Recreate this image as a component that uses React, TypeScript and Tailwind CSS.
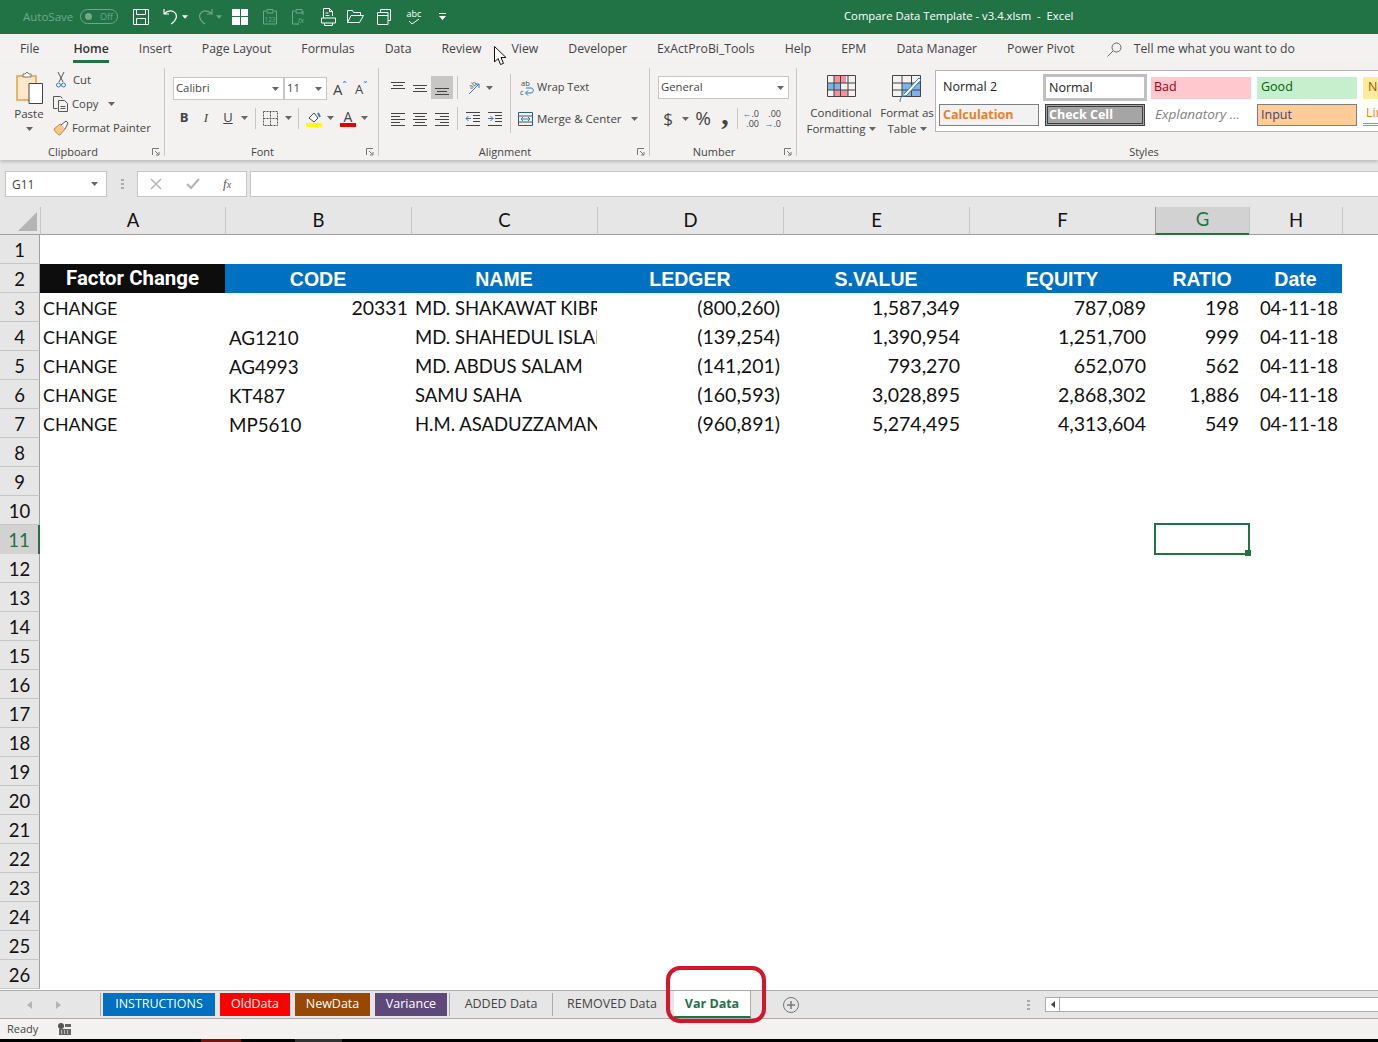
import type { ReactNode } from "react";

const ui = "font-['Open_Sans','Noto_Sans',sans-serif]";
const sheetFont = "font-['Lato','Noto_Sans',sans-serif]";

const Caret = ({ className = "text-[#666]" }: { className?: string }) => (
  <svg width="7" height="4" viewBox="0 0 7 4" className={className}>
    <path d="M0 0h7L3.5 4z" fill="currentColor" />
  </svg>
);

const Launcher = () => (
  <svg width="8" height="8" viewBox="0 0 8 8" fill="none" stroke="#777" strokeWidth="1">
    <path d="M0.5 7V0.5H7" />
    <path d="M3 3l3.5 3.5M7 4v3H4" />
  </svg>
);

const VSep = ({ className = "h-[24px]" }: { className?: string }) => (
  <div className={`w-px bg-[#c8c6c4] shrink-0 ${className}`} />
);

const Group = ({
  label,
  width,
  children,
}: {
  label: string;
  width: string;
  children: ReactNode;
}) => (
  <div className={`${width} h-[88px] shrink-0 border-r border-[#c8c6c4] flex flex-col`}>
    <div className="h-[76px] shrink-0">{children}</div>
    <div className="h-[16px] flex items-center text-[11px] text-[#444] leading-[16px]">
      <span className="flex-1 text-center">{label}</span>
      <span className="w-[18px] flex justify-end pr-[4px]">
        <Launcher />
      </span>
    </div>
  </div>
);

const TitleBar = () => (
  <div className="h-[34px] shrink-0 bg-[#217346] flex items-center text-white pb-[1px]">
    <span className="ml-[23px] w-[50px] text-[11.5px] text-[#6ea98a]">AutoSave</span>
    <div className="ml-[7px] w-[38px] h-[15px] rounded-full border border-[#6ea98a] flex items-center justify-between px-[4px] text-[9px] text-[#6ea98a]">
      <span className="w-[7px] h-[7px] rounded-full bg-[#6ea98a]" />
      <span>Off</span>
    </div>
    <svg className="ml-[15px]" width="16" height="16" viewBox="0 0 16 16" fill="none" stroke="#fff">
      <path d="M.5.5h15v15H.5zM3.5.5v5h9v-5M3.5 15.5v-6h9v6" />
    </svg>
    <svg className="ml-[14px]" width="16" height="17" viewBox="0 0 16 17" fill="none" stroke="#fff" strokeWidth="1.2">
      <path d="M1 1v5h5M1 6c3-3 7-4 10-2 4 3 3 8-3 12" />
    </svg>
    <span className="ml-[3px] w-[6px] flex">
      <Caret className="text-white" />
    </span>
    <svg className="ml-[9px]" width="16" height="17" viewBox="0 0 16 17" fill="none" stroke="#6ea98a" strokeWidth="1.2">
      <path d="M15 1v5h-5M15 6c-3-3-7-4-10-2-4 3-3 8 3 12" />
    </svg>
    <span className="ml-[3px] w-[6px] flex">
      <Caret className="text-[#6ea98a]" />
    </span>
    <div className="ml-[10px] w-[16px] h-[16px] grid grid-cols-2 gap-px">
      <span className="bg-white" />
      <span className="bg-white" />
      <span className="bg-white" />
      <span className="bg-white" />
    </div>
    <svg className="ml-[15px]" width="14" height="17" viewBox="0 0 14 17" fill="none" stroke="#6ea98a">
      <path d="M3 3H.5v13h13V3H11M4 1.500h6V5H4z" />
      <text x="7" y="14" fontSize="6.500" textAnchor="middle" fill="#6ea98a" stroke="none">123</text>
    </svg>
    <svg className="ml-[15px]" width="14" height="17" viewBox="0 0 14 17" fill="none" stroke="#6ea98a">
      <path d="M3 3H.5v13h6M11 3v4M4 1.500h6V5H4z" />
      <text x="9" y="15" fontSize="8" fontStyle="italic" textAnchor="middle" fill="#6ea98a" stroke="none">fx</text>
    </svg>
    <svg className="ml-[15px]" width="15" height="18" viewBox="0 0 15 18" fill="none" stroke="#fff">
      <path d="M2.500 10V.5h6l3 3V8M8.500.5v3h3M.5 10h14v5h-14zM3.500 15v2.500h8V15M4.500 5h3M4.500 7.500h4" />
    </svg>
    <svg className="ml-[11px]" width="17" height="13" viewBox="0 0 17 13" fill="none" stroke="#fff">
      <path d="M.5 12.500V.5h5l1 2h7v2.500M.5 12.500h12l4-7H4z" />
    </svg>
    <svg className="ml-[13px]" width="14" height="16" viewBox="0 0 14 16" fill="none" stroke="#fff">
      <path d="M3.500 3V.5h10v11H11M.5 3.500h10.500v12H.5zM.5 6.500h10.500" />
    </svg>
    <div className="ml-[15px] w-[16px] flex flex-col items-center leading-none">
      <span className="text-[9px] leading-[9px]">abc</span>
      <svg width="12" height="7" viewBox="0 0 12 7" fill="none" stroke="#fff">
        <path d="M1 3l3 3 7-5" />
      </svg>
    </div>
    <div className="ml-[17px] w-[7px] flex flex-col gap-[2px]">
      <span className="h-px bg-white" />
      <Caret className="text-white" />
    </div>
    <span className="ml-[398px] text-[11.3px] whitespace-pre">Compare Data Template - v3.4.xlsm  -  Excel</span>
  </div>
);

const tabs = [
  "Insert",
  "Page Layout",
  "Formulas",
  "Data",
  "Review",
  "View",
  "Developer",
  "ExActProBi_Tools",
  "Help",
  "EPM",
  "Data Manager",
  "Power Pivot",
];

const MenuTabs = () => (
  <div className="h-[30px] shrink-0 flex items-center text-[12.25px] text-[#444] pl-[20px] gap-[30px] pt-[1px]">
    <span>File</span>
    <span className="relative ml-[4px] font-semibold text-[#333]">
      Home
      <span className="absolute left-0 right-0 top-[20px] h-[3px] bg-[#217346]" />
    </span>
    {tabs.map((t) => (
      <span key={t}>{t}</span>
    ))}
    <span className="flex items-center gap-[12px] ml-[2px]">
      <svg width="15" height="15" viewBox="0 0 15 15" fill="none" stroke="#666">
        <circle cx="9.500" cy="5.500" r="4.500" />
        <path d="M6 9l-5.500 5.500" />
      </svg>
      Tell me what you want to do
    </span>
  </div>
);

const Clipboard = () => (
  <Group label="Clipboard" width="w-[165px]">
    <div className="flex h-full">
      <div className="w-[53px] flex flex-col items-center pt-[3px] pl-[5px]">
        <svg width="29" height="33" viewBox="0 0 29 33" fill="none">
          <path d="M2 5h19v24H2z" fill="#fde9c9" stroke="#e8a33d" strokeWidth="1.500" />
          <path d="M8 6V3h2l2-2 2 2h2v3z" fill="#fff" stroke="#777" />
          <path d="M14 12.500h13.500v20H14z" fill="#fff" stroke="#444" />
        </svg>
        <span className="text-[11.5px] mt-[2px] leading-[16px] text-[#444]">Paste</span>
        <span className="mt-[5px] flex">
          <Caret />
        </span>
      </div>
      <div className="flex flex-col text-[11.3px] text-[#444] leading-[16px]">
        <div className="h-[24px] flex items-center gap-[7px] pl-[3px]">
          <svg width="10" height="16" viewBox="0 0 10 16" fill="none">
            <path d="M2 0l5 10M8 0L3 10" stroke="#555" />
            <circle cx="2.500" cy="13" r="2" stroke="#2a7bc0" />
            <circle cx="7.500" cy="13" r="2" stroke="#2a7bc0" />
          </svg>
          Cut
        </div>
        <div className="h-[24px] flex items-center gap-[3px]">
          <svg width="16" height="16" viewBox="0 0 16 16" fill="none" stroke="#555">
            <path d="M4.500 12.500H.5V.5h7l2 2" />
            <path d="M5.500 4.500h6l3 3v8h-9zM7.500 10.500h5M7.500 12.500h5" />
          </svg>
          Copy
          <span className="ml-[7px] flex">
            <Caret />
          </span>
        </div>
        <div className="h-[24px] flex items-center gap-[3px]">
          <svg width="16" height="16" viewBox="0 0 16 16" fill="none">
            <path d="M1 9l6-5 5 5-5 6c-2 0-5-3-6-6z" fill="#f7c58b" stroke="#d9822b" />
            <path d="M8 5l5-4 2 2-3 6" fill="#fff" stroke="#555" />
          </svg>
          Format Painter
        </div>
      </div>
    </div>
  </Group>
);

const Field = ({ w, text }: { w: string; text: string }) => (
  <div className={`${w} h-[23px] bg-white border border-[#c8c6c4] flex items-center justify-between pl-[2px] pr-[4px] text-[11.3px] text-[#444]`}>
    <span>{text}</span>
    <Caret />
  </div>
);

const Font = () => (
  <Group label="Font" width="w-[214px]">
    <div className="pt-[9px] pl-[8px]">
      <div className="flex items-center h-[23px]">
        <Field w="w-[111px]" text="Calibri" />
        <Field w="w-[43px]" text="11" />
        <span className="ml-[6px] w-[22px] text-[15px] leading-[18px] text-[#444] flex">
          A<span className="text-[#2a7bc0] text-[10px] leading-[12px]">ˆ</span>
        </span>
        <span className="w-[14px] text-[13px] leading-[18px] text-[#444] flex">
          A<span className="text-[#2a7bc0] text-[10px] leading-[12px]">ˇ</span>
        </span>
      </div>
      <div className="flex items-center h-[22px] mt-[7px] text-[#444] text-[13px]">
        <span className="w-[22px] text-center font-bold">B</span>
        <span className="w-[22px] text-center italic font-['Liberation_Serif',serif]">I</span>
        <span className="w-[22px] text-center underline">U</span>
        <span className="w-[10px] flex justify-center">
          <Caret />
        </span>
        <VSep className="h-[21px] ml-[6px]" />
        <svg className="ml-[7px]" width="15" height="15" viewBox="0 0 15 15" fill="none" stroke="#555" strokeDasharray="2 1">
          <path d="M.5.5h14v14H.5zM7.500.5v14M.5 7.500h14" />
        </svg>
        <span className="w-[20px] flex justify-center">
          <Caret />
        </span>
        <VSep className="h-[21px]" />
        <svg className="ml-[7px]" width="16" height="17" viewBox="0 0 16 17" fill="none">
          <path d="M3 8l5-5 4 5-4 4z" fill="#fff" stroke="#444" />
          <path d="M12 3l2 4" stroke="#2a7bc0" strokeWidth="2" />
          <path d="M0 13h16v4H0z" fill="#ffff00" />
        </svg>
        <span className="w-[16px] flex justify-center">
          <Caret />
        </span>
        <div className="ml-[2px] w-[16px] flex flex-col items-center">
          <span className="text-[14px] leading-[13px]">A</span>
          <span className="w-[16px] h-[4px] bg-[#e00000]" />
        </div>
        <span className="w-[16px] flex justify-center">
          <Caret />
        </span>
      </div>
    </div>
  </Group>
);

const AlignIcon = ({ rows, active = false }: { rows: [number, number[]][]; active?: boolean }) => (
  <span className={`w-[22px] h-[23px] flex items-center justify-center ${active ? "bg-[#c8c6c4]" : ""}`}>
    <svg width="16" height="16" viewBox="0 0 16 16" stroke="#444">
      {rows.map(([y, x], i) => (
        <path key={i} d={`M${x[0]} ${y + 0.5}H${x[1]}`} />
      ))}
    </svg>
  </span>
);

const Alignment = () => (
  <Group label="Alignment" width="w-[271px]">
    <div className="flex h-full">
      <div className="w-[131px] pl-[8px] pt-[8px]">
        <div className="flex items-center h-[23px]">
          <AlignIcon rows={[[2, [1, 15]], [5, [3, 13]], [8, [1, 15]]]} />
          <AlignIcon rows={[[5, [1, 15]], [8, [3, 13]], [11, [1, 15]]]} />
          <AlignIcon active rows={[[8, [1, 15]], [11, [3, 13]], [14, [1, 15]]]} />
          <VSep className="h-[23px] ml-[4px]" />
          <svg className="ml-[8px]" width="15" height="15" viewBox="0 0 15 15" fill="none">
            <text x="3" y="8" fontSize="7" fill="#555" transform="rotate(-40 6 6)">ab</text>
            <path d="M3 14L13 4M9 4h4v4" stroke="#2a7bc0" />
          </svg>
          <span className="ml-[5px] flex">
            <Caret />
          </span>
        </div>
        <div className="flex items-center h-[23px] mt-[8px]">
          <AlignIcon rows={[[2, [1, 15]], [5, [1, 10]], [8, [1, 15]], [11, [1, 10]], [14, [1, 15]]]} />
          <AlignIcon rows={[[2, [1, 15]], [5, [3, 13]], [8, [1, 15]], [11, [3, 13]], [14, [1, 15]]]} />
          <AlignIcon rows={[[2, [1, 15]], [5, [6, 15]], [8, [1, 15]], [11, [6, 15]], [14, [1, 15]]]} />
          <VSep className="h-[23px] ml-[4px]" />
          <span className="w-[7px]" />
          <svg className="mr-[6px]" width="16" height="14" viewBox="0 0 16 14" fill="none">
            <path d="M1 .5h14M8 3.500h7M8 6.500h7M8 9.500h7M1 13.500h14" stroke="#444" />
            <path d="M6 6.500H1M3.500 4l-2.500 2.500L3.500 9" stroke="#2a7bc0" />
          </svg>
          <svg width="16" height="14" viewBox="0 0 16 14" fill="none">
            <path d="M1 .5h14M8 3.500h7M8 6.500h7M8 9.500h7M1 13.500h14" stroke="#444" />
            <path d="M1 6.500h5M3.500 4L6 6.500 3.500 9" stroke="#2a7bc0" />
          </svg>
        </div>
      </div>
      <VSep className="h-[59px] mt-[6px]" />
      <div className="pt-[8px] pl-[7px] text-[11.5px] text-[#444]">
        <div className="h-[23px] flex items-center gap-[3px] pl-[2px] text-[11px]">
          <svg width="14" height="17" viewBox="0 0 14 17" fill="none">
            <text x="1" y="7" fontSize="7.500" fill="#444">ab</text>
            <text x="0" y="16" fontSize="7.500" fill="#444">c</text>
            <path d="M6 9h5c3 0 3 5 0 5H6M8 11.500L5.500 14 8 16.500" stroke="#2a7bc0" />
          </svg>
          Wrap Text
        </div>
        <div className="h-[23px] flex items-center gap-[4px] mt-[8px]">
          <svg width="15" height="14" viewBox="0 0 15 14" fill="none">
            <path d="M.5.5h14v13H.5z" stroke="#1f5f93" />
            <path d="M.5 4h14M.5 10h14" stroke="#555" />
            <path d="M3 7h9M5 5L3 7l2 2M10 5l2 2-2 2" stroke="#2a7bc0" />
          </svg>
          Merge &amp; Center
          <span className="ml-[5px] flex">
            <Caret />
          </span>
        </div>
      </div>
    </div>
  </Group>
);

const NumberGroup = () => (
  <Group label="Number" width="w-[147px]">
    <div className="pt-[8px] pl-[8px]">
      <Field w="w-[131px]" text="General" />
      <div className="flex items-center h-[23px] mt-[8px] text-[#444]">
        <span className="w-[20px] text-center text-[17px]">$</span>
        <span className="ml-[4px] w-[7px] flex">
          <Caret />
        </span>
        <span className="ml-[3px] text-[19px] w-[22px] text-center">%</span>
        <span className="ml-[3px] w-[16px] h-[23px] text-center text-[30px] font-bold leading-[14px] font-['Liberation_Serif',serif]">,</span>
        <VSep className="h-[21px] ml-[4px]" />
        <div className="ml-[3px] w-[18px] text-[9px] leading-[10px] text-right">
          <div>
            <span className="text-[#2a7bc0]">←</span>.0
          </div>
          <div>.00</div>
        </div>
        <div className="ml-[4px] w-[18px] text-[9px] leading-[10px] text-right">
          <div>.00</div>
          <div>
            <span className="text-[#2a7bc0]">→</span>.0
          </div>
        </div>
      </div>
    </div>
  </Group>
);

const styleCell = "w-[100px] h-[22px] shrink-0 flex items-center px-[3px] text-[12.5px] leading-none whitespace-nowrap";

const Styles = () => (
  <div className="flex-1 h-[88px] flex flex-col min-w-0">
    <div className="h-[76px] shrink-0 flex text-[11.500px] leading-[16px] text-[#444]">
      <div className="w-[88px] flex flex-col items-center pt-[7px]">
        <svg width="29" height="22" viewBox="0 0 29 22" fill="none">
          <path d="M7 1h12v7H7zM7 15h14v6H7z" fill="#f4929a" />
          <path d="M1 8h12v7H1z" fill="#7fb2e5" />
          <path d="M.5.500h28v21H.5zM.5 8h28M.5 15h28M7 .5v21M13.500.5v21M21 .5v21" stroke="#444" />
        </svg>
        <span className="mt-[8px] whitespace-nowrap">Conditional</span>
        <span className="flex items-center gap-[3px] whitespace-nowrap">
          Formatting <Caret />
        </span>
      </div>
      <div className="w-[50px] -ml-[3px] flex flex-col items-center pt-[7px]">
        <svg width="30" height="28" viewBox="0 0 30 28" fill="none">
          <path d="M10 8h19v14H10z" fill="#7fb2e5" />
          <path d="M.5.500h28v21H.5zM.5 8h28M.5 15h28M10 .5v21M19.500.5v21" stroke="#444" />
          <path d="M8 27c0-5 3-7 6-6l15-16-2-2L12 19" fill="#fff" stroke="#2a7bc0" />
        </svg>
        <span className="mt-[2px] whitespace-nowrap">Format as</span>
        <span className="flex items-center gap-[3px]">
          Table <Caret />
        </span>
      </div>
      <div className="ml-[3px] flex-1 h-[62px] mt-[2px] bg-white border border-r-0 border-[#b5b5b5] overflow-hidden pl-[3px]">
        <div className="flex items-center h-[33px]">
          <div className={`${styleCell} text-[#222] pl-[4px]`}>Normal 2</div>
          <div className="ml-[4px] w-[104px] h-[27px] shrink-0 border-[3px] border-[#c0c0c0] flex items-center pl-[3px] text-[12.5px] text-[#222]">Normal</div>
          <div className={`${styleCell} ml-[4px] bg-[#ffc7ce] text-[#9c0006]`}>Bad</div>
          <div className={`${styleCell} ml-[6px] bg-[#c6efce] text-[#006100] pl-[4px]`}>Good</div>
          <div className={`${styleCell} ml-[6px] bg-[#ffeb9c] text-[#9c5700] pl-[5px]`}>Neutral</div>
        </div>
        <div className="flex items-start h-[24px] gap-[6px]">
          <div className={`${styleCell} bg-[#f2f2f2] border border-[#7f7f7f] text-[#f07c28] font-bold`}>Calculation</div>
          <div className={`${styleCell} !px-[1px] bg-[#a5a5a5] border-[3px] border-double border-[#3f3f3f] text-white font-bold`}>Check Cell</div>
          <div className={`${styleCell} pl-[4px] !text-[13.5px] text-[#7f7f7f] italic`}>Explanatory ...</div>
          <div className={`${styleCell} bg-[#ffcc99] border border-[#7f7f7f] text-[#3f3f76]`}>Input</div>
          <div className={`${styleCell} border-b-[3px] border-double border-[#ff8001] text-[#f07c28]`}>Linked Cell</div>
        </div>
      </div>
    </div>
    <div className="h-[16px] leading-[16px] text-[11px] text-[#444] text-center pl-[113px]">Styles</div>
  </div>
);

const Ribbon = () => (
  <div className="h-[66px] shrink-0 relative">
    <div className="flex pt-[4px] h-[96px] bg-[#f3f2f1] shadow-[0_2px_3px_rgba(0,0,0,0.18)] relative z-10">
      <Clipboard />
      <Font />
      <Alignment />
      <NumberGroup />
      <Styles />
    </div>
  </div>
);

const FormulaBar = () => (
  <div className="h-[47px] mt-[30px] shrink-0 flex items-start pt-[11px] text-[12px] text-[#444]">
    <div className="ml-[5px] w-[102px] h-[26px] bg-white border border-[#c8c6c4] flex items-center justify-between pl-[6px] pr-[8px]">
      <span className="pt-[1px]">G11</span>
      <Caret />
    </div>
    <div className="ml-[14px] w-[3px] h-[26px] flex flex-col justify-center gap-[2px]">
      <span className="h-[2px] bg-[#aaa]" />
      <span className="h-[2px] bg-[#aaa]" />
      <span className="h-[2px] bg-[#aaa]" />
    </div>
    <div className="ml-[13px] w-[110px] h-[26px] bg-white border border-[#c8c6c4] flex items-center pl-[12px]">
      <svg width="12" height="12" viewBox="0 0 12 12" stroke="#b5b5b5" strokeWidth="1.500">
        <path d="M1 1l10 10M11 1L1 11" />
      </svg>
      <svg className="ml-[24px]" width="14" height="12" viewBox="0 0 14 12" fill="none" stroke="#b5b5b5" strokeWidth="2">
        <path d="M1 6l4 4 8-9" />
      </svg>
      <span className="ml-[23px] text-[13px] italic text-[#555] font-['Liberation_Serif',serif]">
        f<span className="text-[10px]">x</span>
      </span>
    </div>
    <div className="ml-[3px] flex-1 h-[26px] bg-white border border-r-0 border-[#c8c6c4]" />
  </div>
);

const columns = ["A", "B", "C", "D", "E", "F", "G", "H", ""];
const headers = ["CODE", "NAME", "LEDGER", "S.VALUE", "EQUITY", "RATIO", "Date"];

const data = [
  ["CHANGE", "20331", "MD. SHAKAWAT KIBRIA", "(800,260)", "1,587,349", "787,089", "198", "04-11-18"],
  ["CHANGE", "AG1210", "MD. SHAHEDUL ISLAM", "(139,254)", "1,390,954", "1,251,700", "999", "04-11-18"],
  ["CHANGE", "AG4993", "MD. ABDUS SALAM", "(141,201)", "793,270", "652,070", "562", "04-11-18"],
  ["CHANGE", "KT487", "SAMU SAHA", "(160,593)", "3,028,895", "2,868,302", "1,886", "04-11-18"],
  ["CHANGE", "MP5610", "H.M. ASADUZZAMAN", "(960,891)", "5,274,495", "4,313,604", "549", "04-11-18"],
];

const rows = Array.from({ length: 26 }, (_, i) => i + 1);

const cellClass = (i: number, v: string) => {
  if (i === 0) return "text-left text-[17.800px] leading-[31px] pl-[3px]";
  if (i === 2) return "text-left text-[18.500px] leading-[31px] pl-[4px]";
  if (i === 1) return v === "20331" ? "text-right text-[19.500px] leading-[30px] pr-[3px]" : "text-left text-[18.800px] leading-[31px] pl-[4px]";
  if (i === 3) return "text-right text-[19.500px] leading-[30px] pr-[3px]";
  if (i === 7) return "text-right text-[18.500px] leading-[31px] pr-[4px]";
  if (i === 6) return "text-right text-[19.500px] leading-[30px] pr-[10px]";
  return "text-right text-[19.500px] leading-[30px] pr-[9px]";
};

const Sheet = () => (
  <div className={`h-[783px] shrink-0 overflow-hidden bg-white grid grid-cols-[40px_185px_186px_186px_186px_186px_186px_94px_93px_1fr] grid-rows-[28px_repeat(26,29px)] ${sheetFont} text-[18.500px] text-[#111]`}>
    <div className="bg-[#e6e6e6] border-b border-[#9f9f9f] flex items-end justify-end pr-[3px] pb-[3px]">
      <svg width="19" height="19" viewBox="0 0 19 19">
        <path d="M19 0v19H0z" fill="#b4b4b4" />
      </svg>
    </div>
    {columns.map((c, i) => (
      <div
        key={i}
        className={
          c === "G"
            ? "bg-[#d2d2d2] border-l border-[#9f9f9f] border-b-2 border-b-[#217346] text-[#217346] flex items-center justify-center"
            : "bg-[#e6e6e6] border-l border-[#c6c6c6] border-b border-b-[#9f9f9f] flex items-center justify-center"
        }
      >
        {c}
      </div>
    ))}
    {rows.map((r) => {
      const row = data[r - 3];
      return (
        <div key={r} className="contents">
          <div
            className={
              r === 11
                ? "bg-[#d2d2d2] border-r-2 border-[#217346] text-[#217346] flex items-center justify-center pt-[3px]"
                : "bg-[#e6e6e6] border-r border-b border-[#9f9f9f] border-b-[#c6c6c6] flex items-center justify-center pt-[3px]"
            }
          >
            {r}
          </div>
          {r === 2 ? (
            <>
              <div className="bg-[#0d0d0d] text-white text-center leading-[29px] font-bold text-[20.400px] font-['Roboto',sans-serif]">Factor Change</div>
              {headers.map((h) => (
                <div key={h} className="bg-[#0070c0] text-white text-center leading-[30px] font-bold text-[19.500px] font-['Liberation_Sans',sans-serif]">
                  {h}
                </div>
              ))}
              <div />
            </>
          ) : row ? (
            <>
              {row.map((v, i) => (
                <div key={i} className={`overflow-hidden whitespace-nowrap ${cellClass(i, v)}`}>
                  {v}
                </div>
              ))}
              <div />
            </>
          ) : r === 11 ? (
            <>
              <div className="col-span-6" />
              <div className="relative border-2 border-[#217346] -mt-[2px] -ml-px -mr-px -mb-px">
                <span className="absolute -right-[3px] -bottom-[3px] w-[6px] h-[6px] bg-[#217346]" />
              </div>
              <div className="col-span-2" />
            </>
          ) : (
            <div className="col-span-9" />
          )}
        </div>
      );
    })}
  </div>
);

const sheetTabs = [
  { name: "INSTRUCTIONS", cls: "w-[112px] bg-[#0070c0] text-white" },
  { name: "OldData", cls: "w-[70px] bg-[#ff0000] text-white" },
  { name: "NewData", cls: "w-[75px] bg-[#974706] text-white" },
  { name: "Variance", cls: "w-[72px] bg-[#5f497a] text-white" },
];

const TabBar = () => (
  <div className="h-[29px] shrink-0 bg-[#e6e6e6] border-t border-b border-[#ababab] flex items-stretch text-[12.500px] text-[#444]">
    <div className="w-[101px] flex items-center pl-[27px] gap-[24px] border-r border-[#ababab] my-[2px]">
      <svg width="5" height="8" viewBox="0 0 5 8">
        <path d="M5 0v8L0 4z" fill="#b5b5b5" />
      </svg>
      <svg width="5" height="8" viewBox="0 0 5 8">
        <path d="M0 0v8l5-4z" fill="#b5b5b5" />
      </svg>
    </div>
    {sheetTabs.map((t) => (
      <div key={t.name} className={`${t.cls} ml-[2px] mr-[3px] my-[2px] flex items-center justify-center`}>
        {t.name}
      </div>
    ))}
    <div className="w-[104px] my-[2px] -ml-px border-l border-r border-[#ababab] flex items-center justify-center">ADDED Data</div>
    <div className="w-[118px] my-[2px] flex items-center justify-center">REMOVED Data</div>
    <div className="w-[77px] ml-[3px] pt-[1px] bg-white border-r border-[#ababab] border-b-2 border-b-[#217346] flex items-center justify-center text-[#217346] font-bold">Var Data</div>
    <div className="ml-[32px] flex items-center">
      <svg width="16" height="16" viewBox="0 0 16 16" fill="none" stroke="#777">
        <circle cx="8" cy="8" r="7.500" />
        <path d="M8 4v8M4 8h8" strokeWidth="1.500" />
      </svg>
    </div>
    <div className="ml-[228px] flex items-center">
      <div className="w-[3px] flex flex-col gap-[2px]">
        <span className="h-[2px] bg-[#aaa]" />
        <span className="h-[2px] bg-[#aaa]" />
        <span className="h-[2px] bg-[#aaa]" />
      </div>
    </div>
    <div className="ml-[15px] flex-1 my-[6px] bg-white border border-r-0 border-[#ababab] flex">
      <div className="w-[14px] border-r border-[#ababab] flex items-center justify-center">
        <svg width="4" height="7" viewBox="0 0 4 7">
          <path d="M4 0v7L0 3.500z" fill="#444" />
        </svg>
      </div>
    </div>
  </div>
);

const StatusBar = () => (
  <div className="h-[20px] shrink-0 bg-[#f3f2f1] flex items-center text-[11px] text-[#444] pl-[7px]">
    <span>Ready</span>
    <svg className="ml-[20px]" width="13" height="12" viewBox="0 0 13 12">
      <circle cx="3" cy="3" r="3" fill="#555" />
      <path d="M7 1h6v3H7zM1 6h12v6H1z" fill="#666" />
      <path d="M3 7.500h1v1H3zM6 7.500h1v1H6zM9 7.500h1v1H9zM3 9.500h1v1H3zM6 9.500h1v1H6zM9 9.500h1v1H9z" fill="#fff" />
    </svg>
  </div>
);

export default function App() {
  return (
    <div className={`relative w-[1378px] h-[1042px] overflow-hidden bg-[#e6e6e6] flex flex-col ${ui}`}>
      <TitleBar />
      <div className="bg-[#f3f2f1]">
        <MenuTabs />
      </div>
      <Ribbon />
      <FormulaBar />
      <Sheet />
      <TabBar />
      <StatusBar />
      <div className="flex-1 bg-black flex">
        <span className="ml-[201px] w-[40px] bg-[#7a1010]" />
        <span className="ml-[54px] w-[47px] bg-[#333]" />
      </div>

      {/* red marker drawn over the active sheet tab */}
      <div className="absolute left-[666px] top-[966px] w-[100px] h-[57px] rounded-[14px] border-[4px] border-[#d5152b]" />

      {/* mouse pointer */}
      <svg className="absolute left-[494px] top-[46px] z-20" width="13" height="20" viewBox="0 0 13 20">
        <path d="M.5.5v15.500l3.500-3.500 2.500 6 3-1.200-2.500-5.800h5z" fill="#fff" stroke="#111" />
      </svg>
    </div>
  );
}
